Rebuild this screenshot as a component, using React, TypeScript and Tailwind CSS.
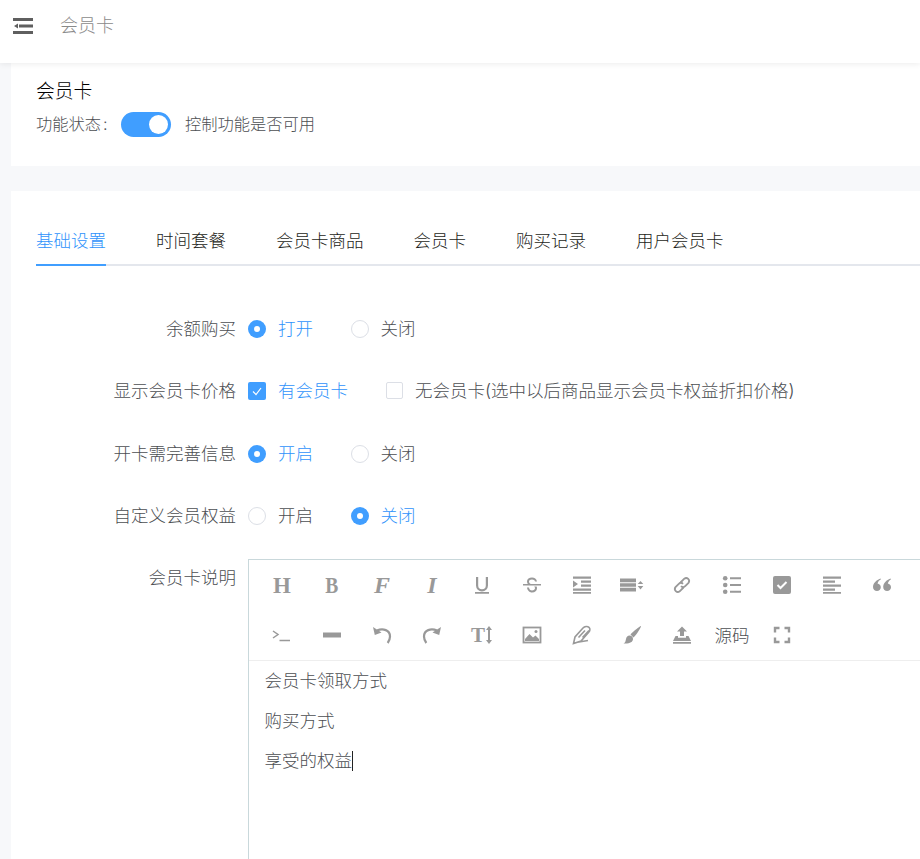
import React from "react";

const font = { fontFamily: '"Inter","Noto Sans CJK SC",sans-serif' };

function Radio({ on, label, cls = "" }: { on?: boolean; label: string; cls?: string }) {
  return (
    <label className={`flex items-center ${cls}`}>
      {on ? (
        <span className="flex h-[18px] w-[18px] items-center justify-center rounded-full bg-[#409eff]">
          <span className="h-[6px] w-[6px] rounded-full bg-white" />
        </span>
      ) : (
        <span className="h-[18px] w-[18px] rounded-full border border-[#dcdfe6] bg-white" />
      )}
      <span className={`ml-[12px] ${on ? "text-[#2f93fb]" : "text-[#4c4e52]"}`}>{label}</span>
    </label>
  );
}

function Row({ label, children, cls = "" }: { label: string; children: React.ReactNode; cls?: string }) {
  return (
    <div className={`flex h-[25px] items-center ${cls}`}>
      <div className="w-[237px] shrink-0 pr-[12px] text-right">{label}</div>
      {children}
    </div>
  );
}

const G = "#999999";
const Svg = ({ children }: { children: React.ReactNode }) => (
  <svg width="20" height="20" viewBox="0 0 20 20" fill={G} stroke="none">{children}</svg>
);
const Txt = ({ c, cls }: { c: string; cls: string }) => (
  <span className={`font-bold leading-none text-[#999999] ${cls}`} style={{ fontFamily: '"Liberation Serif",serif' }}>{c}</span>
);

const row1: React.ReactNode[] = [
  <Txt c="H" cls="text-[23px]" />,
  <Txt c="B" cls="scale-x-[0.85] text-[23px]" />,
  <Txt c="F" cls="text-[24px] italic" />,
  <Txt c="I" cls="text-[24px] italic" />,
  <Svg><path d="M4 2h2.200v8.500a3.800 3.800 0 0 0 7.600 0V2H16v8.500a6 6 0 0 1-12 0zM3 17h14v1.800H3z" /></Svg>,
  <Svg><path d="M1 9h18v1.500H1z" /><path d="M15 6.500c-.5-2.500-2.500-4-5-4-2.800 0-5 1.500-5 3.800 0 1 .3 1.900.8 2.700h3c-1.200-.5-1.800-1.300-1.800-2.500 0-1 1.200-1.900 3-1.900 1.600 0 2.700.7 3 1.900zM5 12.500c.3 2.800 2.500 5 5 5 3 0 5-1.800 5-4.200 0-.7-.1-1.300-.4-1.800h-2.400c.5.500.8 1 .8 1.700 0 1.200-1.200 2.300-3 2.300-1.600 0-2.800-1.100-3-3z" /></Svg>,
  <Svg><path d="M1 1.500h18v2.300H1zM9 5.500h10v2.300H9zM9 9.500h10v2.300H9zM1 13.500h18v2.300H1zM1 5.500l5 3.500-5 3.500zM1 17h18v1.800H1z" /></Svg>,
  <svg width="26" height="20" viewBox="0 0 26 20" fill={G}><path d="M1 3.500h16v3.700H1zM1 8.200h16v3.600H1zM1 12.800h16v3.700H1zM21.500 6l2.800 3h-5.600zM21.500 14.500L18.700 11h5.600z" /></svg>,
  <svg width="20" height="20" viewBox="0 0 20 20" fill="none" stroke={G} strokeWidth="1.800"><path d="M8.500 7.500l3.800-3.800a3 3 0 0 1 4.200 4.200l-3.300 3.300a3 3 0 0 1-4.200 0" /><path d="M11.500 12.500l-3.800 3.800a3 3 0 0 1-4.200-4.200l3.300-3.300a3 3 0 0 1 4.200 0" /></svg>,
  <Svg><circle cx="3.200" cy="3.200" r="2.300" /><circle cx="3.200" cy="10" r="2.300" /><circle cx="3.200" cy="16.800" r="2.300" /><path d="M8 2.300h11v2H8zM8 9h11v2H8zM8 15.700h11v2H8z" /></Svg>,
  <svg width="20" height="20" viewBox="0 0 20 20"><rect x="1" y="1" width="18" height="18" rx="2" fill={G} /><path d="M5.500 10l3 3 6-6" fill="none" stroke="#fff" strokeWidth="2" /></svg>,
  <Svg><path d="M1 1.500h18v2.300H1zM1 5.500h12v2.300H1zM1 9.500h18v2.300H1zM1 13.500h12v2.300H1zM1 17h18v1.800H1z" /></Svg>,
  <Svg><path d="M5.500 8.500c.7-2.200 2-3.500 3.500-4.200l-.6-.9C4.500 5 1 8 1 12c0 2.400 1.900 4 4 4s3.800-1.500 3.800-3.700-1.500-3.400-3.300-3.800zM15.800 8.500c.7-2.200 2-3.500 3.200-4.200l-.6-.9C14.500 5 11.200 8 11.200 12c0 2.400 1.800 4 3.900 4s3.900-1.500 3.900-3.700-1.500-3.400-3.200-3.800z" /></Svg>,
];

const row2: React.ReactNode[] = [
  <svg width="20" height="20" viewBox="0 0 20 20" fill="none" stroke={G} strokeWidth="1.500"><path d="M1 6l5 3.500L1 13M7.500 15.500H18" /></svg>,
  <Svg><path d="M1 7.500h18v5H1z" /></Svg>,
  <svg width="20" height="20" viewBox="0 0 20 20" fill="none" stroke={G} strokeWidth="2.200"><path d="M5 5.500c6-2.500 13-.5 13 6 0 2.500-.8 4.500-2.300 6.500" /><path d="M1 2l1.800 8 6.700-2.500z" fill={G} stroke="none" /></svg>,
  <svg width="20" height="20" viewBox="0 0 20 20" fill="none" stroke={G} strokeWidth="2.200"><path d="M15 5.500c-6-2.500-13-.5-13 6 0 2.500.8 4.500 2.300 6.500" /><path d="M19 2l-1.800 8-6.700-2.500z" fill={G} stroke="none" /></svg>,
  <span className="flex items-center">
    <Txt c="T" cls="text-[21px]" />
    <svg width="8" height="20" viewBox="0 0 8 20" fill={G}><path d="M4 1l3 4H5v10h2l-3 4-3-4h2V5H1z" /></svg>
  </span>,
  <svg width="20" height="20" viewBox="0 0 20 20"><rect x="1.500" y="2.500" width="17" height="15" fill="#fff" stroke={G} strokeWidth="1.800" /><path d="M3 16v-2l4.500-5 3.500 3.500 2.500-2 3.500 3.500V16z" fill={G} /><circle cx="14" cy="6.500" r="1.500" fill={G} /></svg>,
  <svg width="20" height="20" viewBox="0 0 20 20" fill="none" stroke={G} strokeWidth="1.600"><path d="M1.500 18.500L3 12l8-9c1.600-1.800 4.500-2 6-.7s1 3.700-.5 5.200L9 16zM6.500 12.500L13 5.500M10.500 12.500L17 5.500M4 17.500l12-2" /></svg>,
  <Svg><path d="M19 1c.5.500-4.500 9-7.500 11.500l-3-3C11 6.500 18.500.5 19 1zM7.500 10.500c2 0 3.500 1.500 3.500 3.500 0 3-3.500 5-9.500 4.500 2-1 2-2.500 2.500-4.500.4-2 1.700-3.500 3.500-3.500z" /></Svg>,
  <Svg><path d="M10 1.500l5 5h-3v4.500H8V6.500H5zM1 17h18v1.800H1zM1 16l2.500-5H6v1.800h8V11h2.500l2.500 5z" /></Svg>,
  <span className="text-[17.5px]">源码</span>,
  <svg width="20" height="20" viewBox="0 0 20 20" fill="none" stroke={G} strokeWidth="2.400"><path d="M3 7.500V3h4.500M12.500 3H17v4.500M17 12.500V17h-4.500M7.500 17H3v-4.500" /></svg>,
];

export default function App() {
  return (
    <div className="h-[859px] w-[920px] overflow-hidden bg-[#f7f8fa] text-[17.5px] font-light leading-[25px] text-[#4c4e52]" style={font}>
      <header className="relative z-10 flex h-[63px] items-start bg-white pl-[13px] shadow-[0_1px_6px_rgba(0,0,0,0.08)]">
        <svg className="mt-[17px]" width="20" height="18" viewBox="0 0 20 18" fill="#5f5f5f">
          <path d="M0 1h20v3H0zM6 7.500h14v3H6zM0 14h20v3H0zM1 9l4-2.500v5z" />
        </svg>
        <span className="ml-[27px] mt-[13px] text-[18px] text-[#8a8a8a]">会员卡</span>
      </header>

      <section className="ml-[11px] h-[103px] w-[909px] bg-white pl-[25px] pt-[16px]">
        <div className="text-[18.750px] text-[#000000]">会员卡</div>
        <div className="mt-[8px] flex h-[25px] items-center text-[16.250px]">
          <span className="w-[85px]">功能状态<span className="ml-[2px]">:</span></span>
          <span className="relative h-[25px] w-[50px] rounded-full bg-[#409eff]">
            <span className="absolute right-[3px] top-[3px] h-[19px] w-[19px] rounded-full bg-white" />
          </span>
          <span className="ml-[14px]">控制功能是否可用</span>
        </div>
      </section>

      <section className="ml-[11px] mt-[25px] w-[909px] bg-white pt-[25px]">
        <div className="mx-[25px] flex h-[50px] w-[884px] items-end border-b-2 border-[#e4e7ed]">
          {["基础设置", "时间套餐", "会员卡商品", "会员卡", "购买记录", "用户会员卡"].map((t, i) => (
            <div
              key={t}
              className={`-mb-[2px] mr-[50px] flex h-[50px] items-center border-b-2 ${i === 0 ? "border-[#409eff] text-[#2f93fb]" : "border-transparent text-[#1c1d20]"}`}
            >
              {t}
            </div>
          ))}
        </div>

        <div className="pt-[50px]">
          <Row label="余额购买">
            <Radio on label="打开" />
            <Radio label="关闭" cls="ml-[37.500px]" />
          </Row>
          <Row label="显示会员卡价格" cls="mt-[37px]">
            <label className="flex items-center">
              <span className="flex h-[18px] w-[18px] items-center justify-center rounded-[2px] bg-[#409eff]">
                <svg width="12" height="12" viewBox="0 0 12 12" fill="none" stroke="#fff" strokeWidth="1.200"><path d="M2 6.500l3 3 5-6.500" /></svg>
              </span>
              <span className="ml-[12px] text-[#2f93fb]">有会员卡</span>
            </label>
            <label className="ml-[38px] flex items-center">
              <span className="h-[17px] w-[17px] rounded-[2px] border border-[#dcdfe6]" />
              <span className="ml-[12px]">无会员卡(选中以后商品显示会员卡权益折扣价格)</span>
            </label>
          </Row>
          <Row label="开卡需完善信息" cls="mt-[38px]">
            <Radio on label="开启" />
            <Radio label="关闭" cls="ml-[37.500px]" />
          </Row>
          <Row label="自定义会员权益" cls="mt-[37px]">
            <Radio label="开启" />
            <Radio on label="关闭" cls="ml-[37.500px]" />
          </Row>

          <div className="mt-[31px] flex">
            <div className="w-[237px] shrink-0 pr-[12px] pt-[6px] text-right">会员卡说明</div>
            <div className="h-[400px] w-[800px] shrink-0 border border-[#c9d8db]">
              <div className="border-b border-[#eeeeee] pl-[8px]">
                {[row1, row2].map((r, ri) => (
                  <div key={ri} className="flex h-[50px] items-center">
                    {r.map((n, i) => (
                      <span key={i} className="flex h-[50px] w-[50px] shrink-0 items-center justify-center">{n}</span>
                    ))}
                  </div>
                ))}
              </div>
              <div className="px-[15.500px] pt-[7px]">
                <p className="h-[40px]">会员卡领取方式</p>
                <p className="h-[40px]">购买方式</p>
                <p className="flex h-[40px] items-start">享受的权益<span className="mt-[3px] h-[20px] w-px bg-[#222]" /></p>
              </div>
            </div>
          </div>
        </div>
      </section>
    </div>
  );
}
